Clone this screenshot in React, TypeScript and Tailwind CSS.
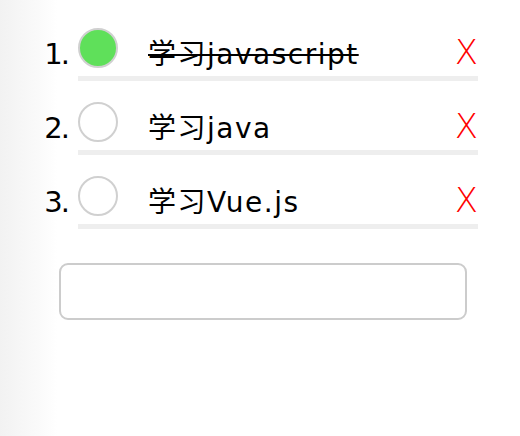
const TODOS = [
  { id: 1, text: "学习javascript", done: true },
  { id: 2, text: "学习java", done: false },
  { id: 3, text: "学习Vue.js", done: false },
];

export default function App() {
  return (
    <div
      className="min-h-[436px] w-[520px] bg-[linear-gradient(to_right,#f2f2f2,#fbfbfb_42px,#fff_57px)] pt-[28px] text-black"
      style={{ fontFamily: '"DejaVu Sans", "Noto Sans CJK SC", sans-serif' }}
    >
      <ol>
        {TODOS.map((t, i) => (
          <li key={t.id} className="mb-[21px] flex">
            <span className="w-[70px] shrink-0 pt-[6px] pr-[2px] text-right text-[29px] leading-[40px] tracking-[-2px]">
              {i + 1}.
            </span>
            <div className="ml-[8px] flex h-[53px] w-[400px] items-start border-b-[5px] border-[#eeeeee]">
              <span
                className={
                  "h-10 w-10 shrink-0 rounded-full border-2 border-[#d0d0d0] " +
                  (t.done ? "bg-[#5fe05a]" : "bg-white")
                }
              />
              <span
                className={
                  "ml-[30px] flex-1 pt-[7px] text-[28px] leading-[40px] tracking-[1.5px] " +
                  (t.done ? "line-through" : "")
                }
              >
                {t.text}
              </span>
              <span className="pt-[4px] text-[34px] font-light leading-[40px] text-[#ff0000]">X</span>
            </div>
          </li>
        ))}
      </ol>
      <div className="ml-[59px] mt-[34px] h-[57px] w-[408px] rounded-[9px] border-2 border-[#cccccc] bg-white" />
    </div>
  );
}
